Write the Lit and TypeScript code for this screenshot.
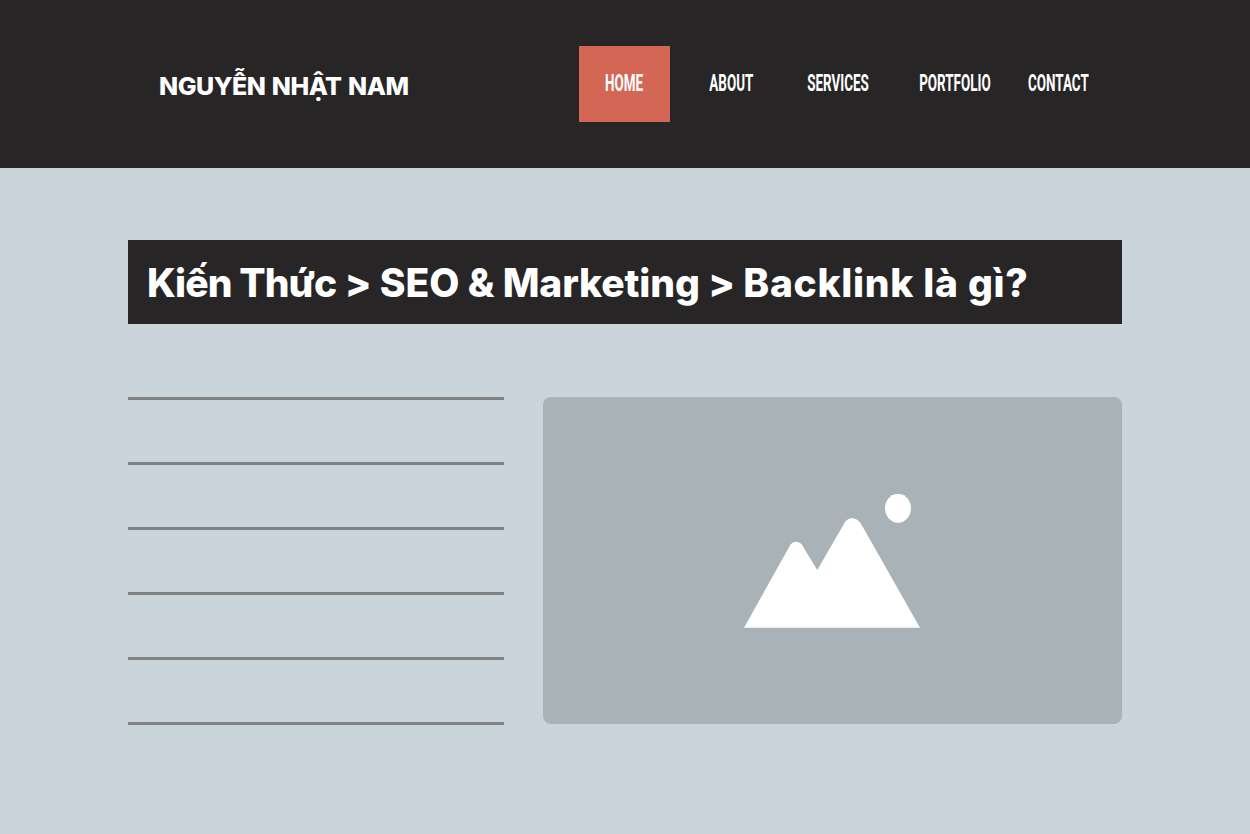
import { LitElement, html, css } from "lit";
import { customElement } from "lit/decorators.js";

@customElement("app-root")
export class AppRoot extends LitElement {
  static styles = css`
    :host { display: block; width: 1250px; height: 834px; background: #cad5db; overflow: hidden; }
    .top { height: 168px; box-sizing: border-box; background: #272526; display: flex; align-items: flex-start; padding: 46px 0 0 159px; }
    .logo { width: 420px; height: 76px; box-sizing: border-box; padding-top: 4px; display: flex; align-items: center; color: #fff; font: 800 25px "Inter", "Liberation Sans", sans-serif; letter-spacing: -0.5px; word-spacing: 1.5px; white-space: nowrap; }
    nav { display: grid; grid-template-columns: 91px 123px 91px 142px 65px; height: 76px; }
    nav a { display: flex; align-items: center; justify-content: center; box-sizing: border-box; padding-bottom: 2px; color: #fff; font: 700 24px "Roboto", sans-serif; white-space: nowrap; }
    nav a span { flex: none; transform: scaleX(0.56); }
    nav a.on { background: #d46655; }
    main { padding: 72px 128px 0 128px; }
    h1 { margin: 0; height: 84px; box-sizing: border-box; background: #272526; color: #fff; display: flex; align-items: center; padding-left: 19px; font: 800 39px "Inter", "Liberation Sans", sans-serif; letter-spacing: -0.1px; white-space: pre; }
    .c1 { letter-spacing: -0.9px; }
    .c3 { letter-spacing: 0.7px; }
    .body { display: grid; grid-template-columns: 376px 579px; column-gap: 39px; align-items: start; margin-top: 73px; }
    .lines { display: flex; flex-direction: column; gap: 62px; }
    .lines i { display: block; height: 3px; background: #808284; }
    .pic { height: 327px; background: #a9b2b7; border-radius: 8px; display: flex; align-items: center; justify-content: center; }
    svg { display: block; position: relative; left: -0.5px; }
  `;

  render() {
    const nav = ["HOME", "ABOUT", "SERVICES", "PORTFOLIO", "CONTACT"];
    return html`
      <header class="top">
        <div class="logo">NGUYỄN NHẬT NAM</div>
        <nav>${nav.map((n, i) => html`<a class=${i === 0 ? "on" : ""}><span>${n}</span></a>`)}</nav>
      </header>
      <main>
        <h1><span><span class="c1">Kiến Thức</span> &gt; SEO &amp; Marketing &gt; <span class="c3">Backlink là gì?</span></span></h1>
        <div class="body">
          <div class="lines">${[0, 1, 2, 3, 4, 5].map(() => html`<i></i>`)}</div>
          <div class="pic">
            <svg width="177" height="134" viewBox="0 0 177 134" fill="#fff">
              <path d="M0 133.7 L45.3 52.7 C48.5 46 56.5 46 60 54.3 L73.3 76 L99.3 31 C103 22 113 22 117.7 31 L176 133.7 Z" />
              <ellipse cx="154" cy="14.3" rx="13" ry="14.5" />
            </svg>
          </div>
        </div>
      </main>
    `;
  }
}
